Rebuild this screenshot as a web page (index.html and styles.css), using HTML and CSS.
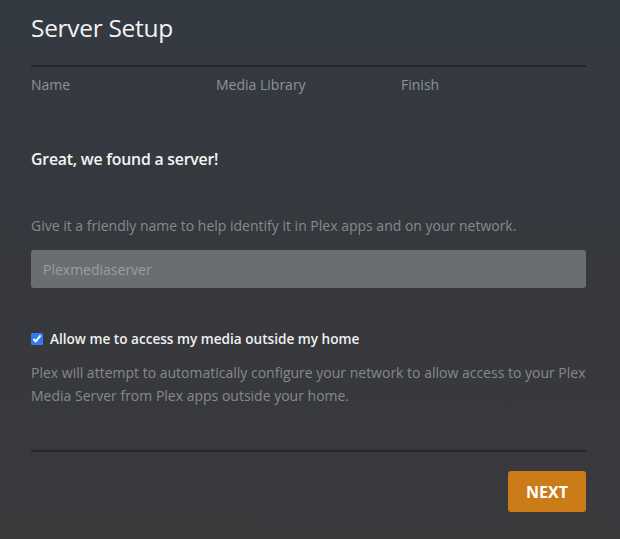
FILE: index.html
```html
<!DOCTYPE html>
<html>
<head>
<meta charset="utf-8">
<link rel="stylesheet" href="styles.css">
</head>
<body>
<div class="page">
  <h1 class="title">Server Setup</h1>
  <div class="steps">
    <div class="step">Name</div>
    <div class="step">Media Library</div>
    <div class="step">Finish</div>
  </div>
  <h2 class="found">Great, we found a server!</h2>
  <p class="hint">Give it a friendly name to help identify it in Plex apps and on your network.</p>
  <input class="name-input" type="text" placeholder="Plexmediaserver">
  <label class="check-row">
    <input type="checkbox" class="check" checked>
    <span>Allow me to access my media outside my home</span>
  </label>
  <p class="desc">Plex will attempt to automatically configure your network to allow access to your Plex Media Server from Plex apps outside your home.</p>
  <div class="footer">
    <button class="next">NEXT</button>
  </div>
</div>
</body>
</html>
```
FILE: styles.css
```css
html, body {
  margin: 0;
  padding: 0;
  height: 100%;
}
body {
  background: linear-gradient(180deg, #343a42 0%, #36383d 50%, #3a3a3d 100%);
  font-family: "Open Sans", "Noto Sans", sans-serif;
  color: #fff;
}
.page {
  padding: 12px 34px 0 31px;
}
.title {
  margin: 0;
  font-size: 24.5px;
  font-weight: 400;
  line-height: 32px;
  color: #f2f2f2;
  letter-spacing: -0.3px;
}
.steps {
  margin-top: 21px;
  border-top: 2px solid #25272b;
  display: grid;
  grid-template-columns: repeat(3, 1fr);
  padding-top: 8px;
}
.step {
  font-size: 14px;
  line-height: 20px;
  color: #8f9296;
}
.found {
  margin: 54px 0 0;
  font-size: 15.8px;
  font-weight: 600;
  line-height: 20px;
  color: #f4f4f4;
  letter-spacing: -0.2px;
}
.hint {
  margin: 47px 0 0;
  font-size: 14px;
  line-height: 20px;
  color: #86898d;
}
.name-input {
  display: block;
  box-sizing: border-box;
  width: 100%;
  height: 38px;
  margin-top: 14px;
  border: none;
  border-radius: 3px;
  background: #6a6d71;
  padding: 0 12px;
  font-family: inherit;
  font-size: 14px;
  color: #ddd;
  outline: none;
}
.name-input::placeholder {
  color: #9a9da1;
}
.check-row {
  display: flex;
  align-items: center;
  gap: 7px;
  margin-top: 41px;
  font-size: 13.6px;
  font-weight: 600;
  line-height: 20px;
  color: #f0f0f0;
}
.check {
  margin: 0;
  width: 12px;
  height: 12px;
  accent-color: #2f7cf6;
}
.desc {
  margin: 12px 0 0;
  font-size: 14px;
  line-height: 23px;
  color: #86898d;
}
.footer {
  margin-top: 43px;
  border-top: 2px solid #26272a;
  display: flex;
  justify-content: flex-end;
  padding-top: 19px;
}
.next {
  width: 78px;
  height: 41px;
  border: none;
  border-radius: 3px;
  background: #cc7b19;
  color: #fff;
  font-family: inherit;
  font-size: 16px;
  font-weight: 700;
  cursor: pointer;
}
```
